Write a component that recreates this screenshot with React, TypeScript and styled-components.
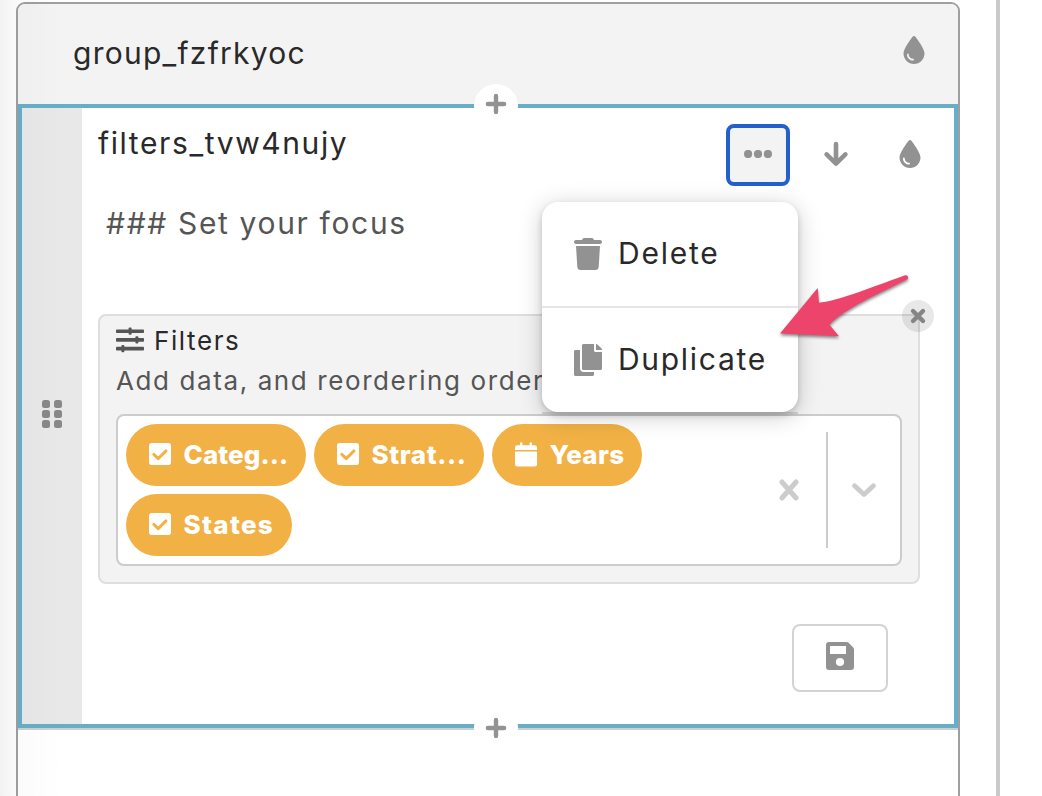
import React from "react";
import styled, { createGlobalStyle } from "styled-components";
import { FaDroplet, FaTrash } from "react-icons/fa6";
import { FaCopy } from "react-icons/fa";

const GlobalStyle = createGlobalStyle`
  *, *::before, *::after { box-sizing: border-box; }
  body { margin: 0; background: #fff; font-family: Inter, "Liberation Sans", sans-serif; color: #292929; }
  button { font: inherit; color: inherit; padding: 0; border: 0; background: none; }
  svg { display: block; flex: none; }
`;

const Page = styled.main`
  position: relative;
  display: flex;
  width: 1042px;
  height: 796px;
  overflow: hidden;
  padding-left: 16px;
`;

const EdgeShade = styled.div`
  position: absolute;
  inset: 0 auto 0 0;
  width: 64px;
  background: linear-gradient(90deg, rgba(0, 0, 0, 0.05), rgba(0, 0, 0, 0.014) 28%, rgba(0, 0, 0, 0));
  pointer-events: none;
`;

const Group = styled.section`
  width: 944px;
  height: 830px;
  flex: none;
  margin-top: 2px;
  border: 2px solid #9f9f9f;
  border-radius: 9px;
  overflow: hidden;
`;

const PaneDivider = styled.div`
  width: 4px;
  flex: none;
  margin-left: 36px;
  background: #cacaca;
`;

const GroupHeader = styled.header`
  display: flex;
  justify-content: space-between;
  align-items: flex-start;
  height: 100px;
  padding: 29px 30px 0 55px;
  background: #f3f3f3;
  color: #929292;

  svg { margin-top: 3px; }
`;

const Label = styled.span<{ $size: number; $track?: number; $color?: string; $weight?: number }>`
  font-size: ${(p) => p.$size}px;
  line-height: 40px;
  letter-spacing: ${(p) => p.$track ?? 0}px;
  font-weight: ${(p) => p.$weight ?? 400};
  color: ${(p) => p.$color ?? "#292929"};
  white-space: nowrap;
`;

const Item = styled.article`
  position: relative;
  display: flex;
  height: 624px;
  border: 4px solid #68aec7;
  background: #fff;
`;

const ItemShadowLine = styled.div`
  height: 2px;
  background: #cfcfcf;
`;

const InsertButton = styled.button<{ $edge: "top" | "bottom" }>`
  position: absolute;
  left: 452px;
  ${(p) => (p.$edge === "top" ? "top: -24px;" : "bottom: -26px;")}
  display: flex;
  justify-content: center;
  align-items: center;
  width: 44px;
  height: 44px;
  padding-bottom: ${(p) => (p.$edge === "top" ? 4 : 0)}px;
  border-radius: 50%;
  background: #fff;
  color: #929292;
`;

const DragHandle = styled.div`
  display: grid;
  grid-template-columns: 8px 8px;
  grid-auto-rows: 8px;
  gap: 2px 4px;
  place-content: center;
  width: 60px;
  flex: none;
  padding-bottom: 4px;
  background: #e8e8e8;
`;

const GripDot = styled.i`
  border-radius: 2.5px;
  background: #888;
`;

const ItemBody = styled.div`
  position: relative;
  flex: 1;
  min-width: 0;
  padding: 16px 34px 0 16px;
`;

const TitleRow = styled.div`
  display: flex;
  justify-content: space-between;
  height: 62px;
  margin-top: -1px;
`;

const Toolbar = styled.div`
  display: flex;
  margin: 1px -18px 0 0;
  color: #929292;
`;

const ToolButton = styled.button<{ $width: number; $active?: boolean }>`
  display: flex;
  justify-content: center;
  align-items: center;
  width: ${(p) => p.$width}px;
  height: 62px;
  padding-bottom: 2px;
  border-radius: 8px;
  ${(p) => p.$active && "border: 4px solid #2460cc; background: #f3f3f3;"}
`;

const Prose = styled.div`
  height: 40px;
  margin: 18px 0 0 8px;
`;

const FilterPanel = styled.section`
  position: relative;
  height: 270px;
  margin-top: 71px;
  padding: 5px 16px 0;
  border: 2px solid #dedede;
  border-radius: 8px;
  background: #f3f3f3;
`;

const PanelHeading = styled.div`
  display: flex;
  align-items: center;
  gap: 10px;
  height: 40px;

  svg { margin-top: -2px; }
`;

const PanelClose = styled.button`
  position: absolute;
  top: -16px;
  right: -16px;
  display: flex;
  justify-content: center;
  align-items: center;
  width: 32px;
  height: 32px;
  border-radius: 50%;
  background: rgba(0, 0, 0, 0.09);
  color: #858585;
`;

const Select = styled.div`
  display: flex;
  height: 152px;
  margin-top: 13px;
  border: 2px solid #ccc;
  border-radius: 8px;
  background: #fff;
  color: #ccc;
`;

const Chips = styled.div`
  display: flex;
  flex-wrap: wrap;
  align-content: flex-start;
  gap: 8px;
  width: 636px;
  padding: 8px;
`;

const Chip = styled.span<{ $width: number }>`
  display: flex;
  align-items: center;
  width: ${(p) => p.$width}px;
  height: 62px;
  padding-left: 22px;
  border-radius: 31px;
  background: #f1b144;
  color: #fff;
`;

const ChipIcon = styled.span`
  display: flex;
  justify-content: center;
  width: 24px;
  margin: 0 11.5px 2px 0;
`;

const Indicator = styled.button<{ $width: number }>`
  display: flex;
  justify-content: center;
  align-items: center;
  width: ${(p) => p.$width}px;
`;

const Separator = styled.i`
  width: 2px;
  margin: 16px 0;
  background: #ccc;
`;

const Actions = styled.div`
  display: flex;
  justify-content: flex-end;
  padding: 40px 32px 0 0;
`;

const SaveButton = styled.button`
  display: flex;
  justify-content: center;
  align-items: center;
  width: 96px;
  height: 68px;
  padding-bottom: 4px;
  border: 2px solid #d3d3d3;
  border-radius: 8px;
  background: #fff;
  color: #929292;
`;

const Menu = styled.div`
  position: absolute;
  top: 94px;
  left: 460px;
  width: 256px;
  height: 210px;
  border-radius: 16px;
  background: #fff;
  box-shadow: 0 4px 24px rgba(0, 0, 0, 0.2), 0 3px 6px rgba(0, 0, 0, 0.16);

  &::after {
    content: "";
    position: absolute;
    inset: auto 0 -2px;
    height: 2px;
    background: rgba(0, 0, 0, 0.13);
  }
`;

const MenuItem = styled.button`
  display: flex;
  align-items: center;
  gap: 14px;
  width: 100%;
  height: 104px;
  padding-left: 30px;
  color: #929292;

  span { margin-top: -2px; }

  & + & {
    height: 106px;
    border-top: 2px solid #e6e6e6;
  }
`;

const Pointer = styled.svg`
  position: absolute;
  top: 268px;
  left: 774px;
  filter: drop-shadow(0 2px 1.5px rgba(0, 0, 0, 0.45));
`;

const StrokeIcon = ({ w, h, d, weight = 4.6 }: { w: number; h: number; d: string; weight?: number }) => (
  <svg
    width={w}
    height={h}
    viewBox={`0 0 ${w} ${h}`}
    fill="none"
    stroke="currentColor"
    strokeWidth={weight}
    strokeLinecap="round"
    strokeLinejoin="round"
    overflow="visible"
  >
    <path d={d} />
  </svg>
);

const PlusIcon = () => <StrokeIcon w={20} h={20} d="M10 1.9V18.1M1.9 10H18.1" weight={4.4} />;
const ArrowDownIcon = () => <StrokeIcon w={24} h={24} d="M12 2V21.5M2.6 12.4 12 21.6 21.4 12.4" />;
const ClearIcon = () => <StrokeIcon w={20} h={22} d="M2.9 3 17.1 19M17.1 3 2.9 19" weight={5} />;
const CloseIcon = () => <StrokeIcon w={14} h={14} d="M2 2 12 12M12 2 2 12" weight={4.4} />;
const ChevronIcon = () => <StrokeIcon w={24} h={14} d="M2.5 2.8 12 11.6 21.5 2.8" weight={4.8} />;

const DotsIcon = () => (
  <svg width="28" height="8" viewBox="0 0 28 8" fill="currentColor">
    <circle cx="4.1" cy="4" r="4.1" />
    <circle cx="14" cy="4" r="4.1" />
    <circle cx="23.9" cy="4" r="4.1" />
  </svg>
);

const SlidersIcon = () => (
  <svg width="28" height="26" viewBox="0 0 28 26" fill="#555">
    <rect y="2.4" width="28" height="3.7" rx="0.8" />
    <rect x="12.6" y="0.6" width="3" height="7.2" rx="1" />
    <rect y="11" width="28" height="3.7" rx="0.8" />
    <rect x="19.4" y="9.2" width="3" height="7.2" rx="1" />
    <rect y="19.8" width="28" height="3.7" rx="0.8" />
    <rect x="5.4" y="18" width="3" height="7.2" rx="1" />
  </svg>
);

const CheckIcon = () => (
  <svg width="22" height="22" viewBox="0 0 22 22">
    <rect width="22" height="22" rx="2.8" fill="#fff" />
    <path d="M4.8 11.4 9.2 15.6 17 7.9" fill="none" stroke="#f1b144" strokeWidth="2.9" strokeLinecap="round" strokeLinejoin="round" />
  </svg>
);

const CalendarIcon = () => (
  <svg width="22" height="25" viewBox="0 0 22 25" fill="#fff">
    <path d="M0 8V5.5Q0 3.2 2.3 3.2H5V1Q5 .2 6.2 .2T7.4 1V3.2H14.6V1Q14.6 .2 15.8 .2T17 1V3.2H19.7Q22 3.2 22 5.5V8Z" />
    <path d="M0 9.5H22V22Q22 24.5 19.5 24.5H2.5Q0 24.5 0 22Z" />
  </svg>
);

const SaveIcon = () => (
  <svg width="28" height="28" viewBox="0 0 28 28" fill="currentColor" fillRule="evenodd">
    <path d="M3 0H20.6Q21.8 0 22.6 .8L27.2 5.4Q28 6.2 28 7.4V25Q28 28 25 28H3Q0 28 0 25V3Q0 0 3 0ZM4 4V12H20V4ZM14 15.9A4.1 4.1 0 1 0 14 24.1 4.1 4.1 0 1 0 14 15.9Z" />
  </svg>
);

const filters = [
  { label: "Categ...", width: 180, track: 0.1, icon: "check" },
  { label: "Strat...", width: 170, track: 0.6, icon: "check" },
  { label: "Years", width: 150, track: 0.3, icon: "date" },
  { label: "States", width: 166, track: 1.3, icon: "check" },
];

export default function App() {
  return (
    <>
      <GlobalStyle />
      <Page>
        <Group>
          <GroupHeader>
            <Label $size={30} $track={1.25}>group_fzfrkyoc</Label>
            <FaDroplet size={28} />
          </GroupHeader>
          <Item>
            <DragHandle>
              {Array.from({ length: 6 }, (_, i) => <GripDot key={i} />)}
            </DragHandle>
            <ItemBody>
              <TitleRow>
                <Label $size={30} $track={1.6}>filters_tvw4nujy</Label>
                <Toolbar>
                  <ToolButton $width={64} $active aria-label="More"><DotsIcon /></ToolButton>
                  <ToolButton $width={92} aria-label="Move down"><ArrowDownIcon /></ToolButton>
                  <ToolButton $width={56} aria-label="Style"><FaDroplet size={28} /></ToolButton>
                </Toolbar>
              </TitleRow>
              <Prose>
                <Label $size={30} $track={1.65} $color="#555">### Set your focus</Label>
              </Prose>
              <FilterPanel>
                <PanelHeading>
                  <SlidersIcon />
                  <Label $size={26} $track={1.6}>Filters</Label>
                </PanelHeading>
                <Label $size={26} $track={1.6} $color="#555">Add data, and reordering orders</Label>
                <Select>
                  <Chips>
                    {filters.map((f) => (
                      <Chip key={f.label} $width={f.width}>
                        <ChipIcon>
                          {f.icon === "check" ? <CheckIcon /> : <CalendarIcon />}
                        </ChipIcon>
                        <Label $size={26} $track={f.track} $weight={800} $color="#fff">{f.label}</Label>
                      </Chip>
                    ))}
                  </Chips>
                  <Indicator $width={74} aria-label="Clear"><ClearIcon /></Indicator>
                  <Separator />
                  <Indicator $width={72} aria-label="Open"><ChevronIcon /></Indicator>
                </Select>
                <PanelClose aria-label="Remove"><CloseIcon /></PanelClose>
              </FilterPanel>
              <Actions>
                <SaveButton aria-label="Save"><SaveIcon /></SaveButton>
              </Actions>
              <Menu>
                <MenuItem><FaTrash size={32} /><Label $size={30} $track={1.75}>Delete</Label></MenuItem>
                <MenuItem><FaCopy size={32} /><Label $size={30} $track={1.7}>Duplicate</Label></MenuItem>
              </Menu>
            </ItemBody>
            <InsertButton $edge="top" aria-label="Insert above"><PlusIcon /></InsertButton>
            <InsertButton $edge="bottom" aria-label="Insert below"><PlusIcon /></InsertButton>
          </Item>
          <ItemShadowLine />
        </Group>
        <PaneDivider />
        <EdgeShade />
        <Pointer width="140" height="76" viewBox="774 268 140 76">
          <path
            d="M780 333.5 817.7 288 819 302.7C835 302 870 288 905 275.3 907.5 274.5 909.2 277.5 907.5 279.3 880 293 844 309 829.5 324.7L839 336.3Z"
            fill="#ed446c"
          />
        </Pointer>
      </Page>
    </>
  );
}
